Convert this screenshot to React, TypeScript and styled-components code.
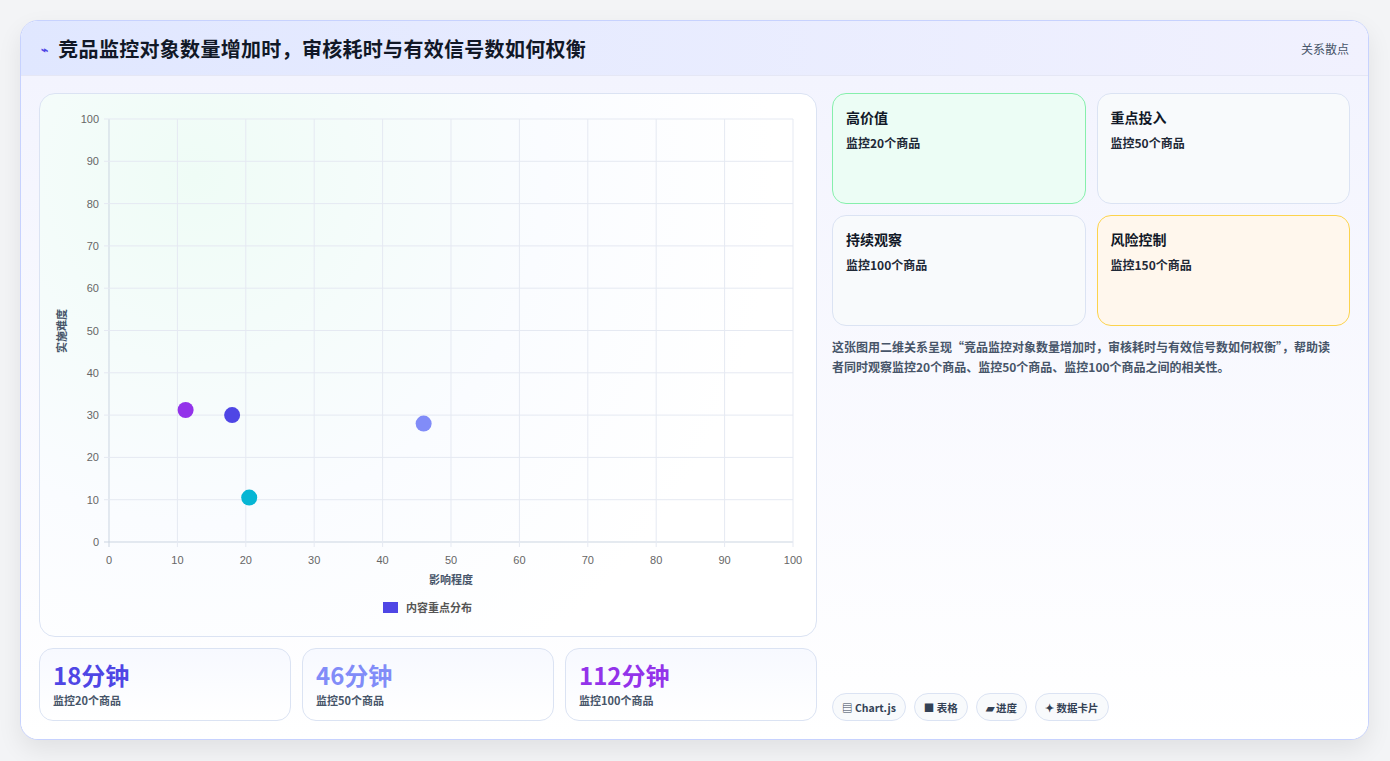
import React from "react";
import styled, { createGlobalStyle } from "styled-components";

const G = createGlobalStyle`
  body { margin: 0; background: #f3f4f6; font-family: "Noto Sans CJK SC", "Noto Sans", sans-serif; }
  * { box-sizing: border-box; }
`;
const Page = styled.div`padding: 20px 21px 21px 20px; background: #f3f4f6;`;
const Card = styled.div`
  background: #fff; border: 1px solid #c7d2fe; border-radius: 18px; overflow: hidden;
  box-shadow: 0 10px 24px rgba(0,0,0,0.08); height: 720px; display: flex; flex-direction: column;
`;
const Header = styled.div`
  height: 55px; flex: none; display: flex; align-items: center; justify-content: space-between;
  padding: 0 19px 0 20px; background: linear-gradient(90deg, #e0e7ff, #f1f1fe); border-bottom: 1px solid #e5e7f5;
`;
const Title = styled.h1`margin: 0; font-size: 20px; font-weight: 700; color: #111827; display: flex; align-items: center; gap: 10px; letter-spacing: 0.3px;`;
const Bolt = styled.span`font-size: 12px; color: #4f46e5;`;
const Tag = styled.span`font-size: 12px; color: #475569;`;
const Body = styled.div`
  flex: 1; display: grid; grid-template-columns: 778px 518px; gap: 15px; padding: 17px 18px 18px 18px;
  background: linear-gradient(180deg, #f3f4fe, #fff);
`;
const Left = styled.div`display: flex; flex-direction: column; gap: 11px;`;
const ChartCard = styled.div`
  height: 544px; border: 1px solid #dbe3f3; border-radius: 16px;
  background: radial-gradient(circle at 20% 15%, #effcf6 0%, #fafcff 45%, #fff 75%);
`;
const Stats = styled.div`display: grid; grid-template-columns: repeat(3, 1fr); gap: 11px;`;
const Stat = styled.div`height: 73px; border: 1px solid #dbe3f3; border-radius: 14px; padding: 10px 13px; background: linear-gradient(180deg,#f7f9ff,#fff);`;
const StatVal = styled.div<{ c: string }>`font-size: 24px; font-weight: 700; color: ${p => p.c}; line-height: 32px;`;
const StatLbl = styled.div`font-size: 11px; color: #475569; font-weight: 600; margin-top: 1px;`;
const Right = styled.div`display: flex; flex-direction: column;`;
const Quad = styled.div`display: grid; grid-template-columns: 1fr 1fr; gap: 11px 11px;`;
const Box = styled.div<{ bg: string; bd: string }>`
  height: 111px; border-radius: 14px; border: 1px solid ${p => p.bd}; background: ${p => p.bg}; padding: 13px 13px;
`;
const BoxT = styled.div`font-size: 14px; font-weight: 700; color: #111827;`;
const BoxS = styled.div`font-size: 12px; font-weight: 600; color: #1f2937; margin-top: 7px;`;
const Desc = styled.p`margin: 11px 0 0; padding-right: 10px; font-size: 12px; line-height: 20px; color: #475569; font-weight: 600;`;
const Chips = styled.div`margin-top: auto; display: flex; gap: 8px;`;
const Chip = styled.span`
  height: 28px; padding: 0 9px; border-radius: 14px; border: 1px solid #dbe3f3; background: #f8fafc;
  display: inline-flex; align-items: center; gap: 3px; font-size: 10.5px; font-weight: 700; color: #334155;
`;

const X0 = 69, X1 = 753, Y0 = 25, Y1 = 448;
const sx = (v: number) => X0 + (v / 100) * (X1 - X0);
const sy = (v: number) => Y1 - (v / 100) * (Y1 - Y0);
const ticks = [0, 10, 20, 30, 40, 50, 60, 70, 80, 90, 100];
const pts = [
  { x: 11.2, y: 31.2, c: "#9333ea" },
  { x: 18, y: 30, c: "#4f46e5" },
  { x: 20.5, y: 10.5, c: "#06b6d4" },
  { x: 46, y: 28, c: "#818cf8" },
];

function Chart() {
  return (
    <svg width="778" height="543" style={{ display: "block" }} fontFamily="'Liberation Sans', 'Noto Sans CJK SC', sans-serif">
      {ticks.map(t => (
        <g key={t}>
          <line x1={sx(t)} x2={sx(t)} y1={Y0} y2={Y1 + 5} stroke={t === 0 ? "#cbd5e1" : "#e5e9f2"} />
          <line x1={X0 - 5} x2={X1} y1={sy(t)} y2={sy(t)} stroke={t === 0 ? "#cbd5e1" : "#e5e9f2"} />
          <text x={X0 - 10} y={sy(t) + 4} fontSize="11" fill="#666" textAnchor="end">{t}</text>
          <text x={sx(t)} y={470} fontSize="11" fill="#666" textAnchor="middle">{t}</text>
        </g>
      ))}
      <text x={411} y={490} fontSize="11" fontWeight="700" fill="#475569" textAnchor="middle">影响程度</text>
      <text transform="translate(26 237) rotate(-90)" fontSize="11" fontWeight="700" fill="#475569" textAnchor="middle">实施难度</text>
      {pts.map((p, i) => <circle key={i} cx={sx(p.x)} cy={sy(p.y)} r="8" fill={p.c} />)}
      <rect x={343} y={508} width={15} height={11} fill="#4f46e5" />
      <text x={366} y={518} fontSize="11" fontWeight="700" fill="#555">内容重点分布</text>
    </svg>
  );
}

export default function App() {
  return (
    <Page>
      <G />
      <Card>
        <Header>
          <Title><Bolt>⌁</Bolt>竞品监控对象数量增加时，审核耗时与有效信号数如何权衡</Title>
          <Tag>关系散点</Tag>
        </Header>
        <Body>
          <Left>
            <ChartCard><Chart /></ChartCard>
            <Stats>
              <Stat><StatVal c="#4f46e5">18分钟</StatVal><StatLbl>监控20个商品</StatLbl></Stat>
              <Stat><StatVal c="#818cf8">46分钟</StatVal><StatLbl>监控50个商品</StatLbl></Stat>
              <Stat><StatVal c="#9333ea">112分钟</StatVal><StatLbl>监控100个商品</StatLbl></Stat>
            </Stats>
          </Left>
          <Right>
            <Quad>
              <Box bg="#ecfdf5" bd="#86efac"><BoxT>高价值</BoxT><BoxS>监控20个商品</BoxS></Box>
              <Box bg="#f8fafc" bd="#dbe3f3"><BoxT>重点投入</BoxT><BoxS>监控50个商品</BoxS></Box>
              <Box bg="#f8fafc" bd="#dbe3f3"><BoxT>持续观察</BoxT><BoxS>监控100个商品</BoxS></Box>
              <Box bg="#fff7ed" bd="#fcd34d"><BoxT>风险控制</BoxT><BoxS>监控150个商品</BoxS></Box>
            </Quad>
            <Desc>这张图用二维关系呈现“竞品监控对象数量增加时，审核耗时与有效信号数如何权衡”，帮助读者同时观察监控20个商品、监控50个商品、监控100个商品之间的相关性。</Desc>
            <Chips>
              <Chip>▤ Chart.js</Chip>
              <Chip>■ 表格</Chip>
              <Chip>▰ 进度</Chip>
              <Chip>✦ 数据卡片</Chip>
            </Chips>
          </Right>
        </Body>
      </Card>
    </Page>
  );
}
